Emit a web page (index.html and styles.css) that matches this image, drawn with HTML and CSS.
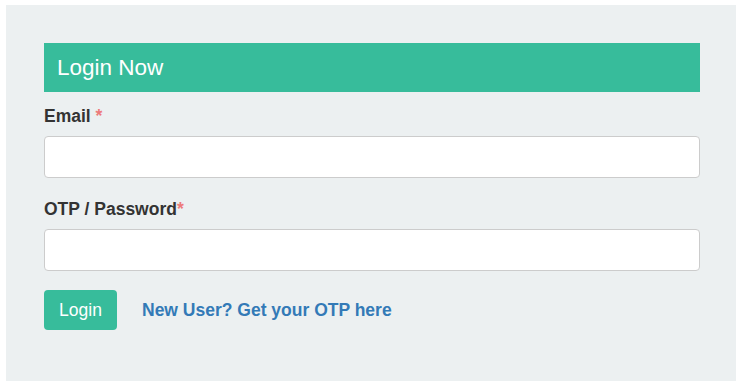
FILE: index.html
```html
<!DOCTYPE html>
<html lang="en">
<head>
    <meta charset="UTF-8">
    <meta name="viewport" content="width=device-width, initial-scale=1.0">
    <title>Login</title>
    <link rel="stylesheet" href="styles.css">
</head>
<body>
    <div class="page">
        <section class="panel">
            <h1 class="panel-title">Login Now</h1>
            <form class="login-form" onsubmit="event.preventDefault();">
                <div class="field">
                    <label class="label" for="email">Email <span class="required">*</span></label>
                    <input class="input" type="email" id="email">
                </div>

                <div class="field">
                    <label class="label" for="password">OTP / Password<span class="required">*</span></label>
                    <input class="input" type="password" id="password">
                </div>

                <div class="actions">
                    <button class="button" type="submit">Login</button>
                    <a href="#" class="otp-link">New User? Get your OTP here</a>
                </div>
            </form>
        </section>
    </div>
</body>
</html>
```

FILE: styles.css
```css
* {
    margin: 0;
    padding: 0;
    box-sizing: border-box;
}
body {
    font-family: "Liberation Sans", Arial, sans-serif;
    background-color: #ffffff;
    font-size: 17.5px;
    color: #333333;
}

.page {
    padding: 5px 0 0 6px;
}

.panel {
    background-color: #ecf0f1;
    padding: 38px 36px 50px 38px;
    min-height: 376px;
}

.panel-title {
    background-color: #37bc9b;
    color: #ffffff;
    font-size: 22.5px;
    font-weight: normal;
    height: 49px;
    line-height: 49px;
    padding-left: 13px;
}

.login-form {
    padding-top: 12px;
}

.field {
    margin-bottom: 19px;
}

.label {
    display: block;
    font-weight: bold;
    line-height: 24px;
    margin-bottom: 8px;
}

.required {
    color: #ec7b7b;
}

.input {
    display: block;
    width: 100%;
    height: 42px;
    border: 1px solid #cccccc;
    border-radius: 4px;
    background: #ffffff;
}

.actions {
    display: flex;
    align-items: center;
    gap: 25px;
}

.button {
    width: 73px;
    height: 40px;
    background-color: #37bc9b;
    color: #ffffff;
    border: none;
    border-radius: 4px;
    font-family: inherit;
    font-size: 17.5px;
    cursor: pointer;
}

.otp-link {
    color: #337ab7;
    font-weight: bold;
    text-decoration: none;
}
```
